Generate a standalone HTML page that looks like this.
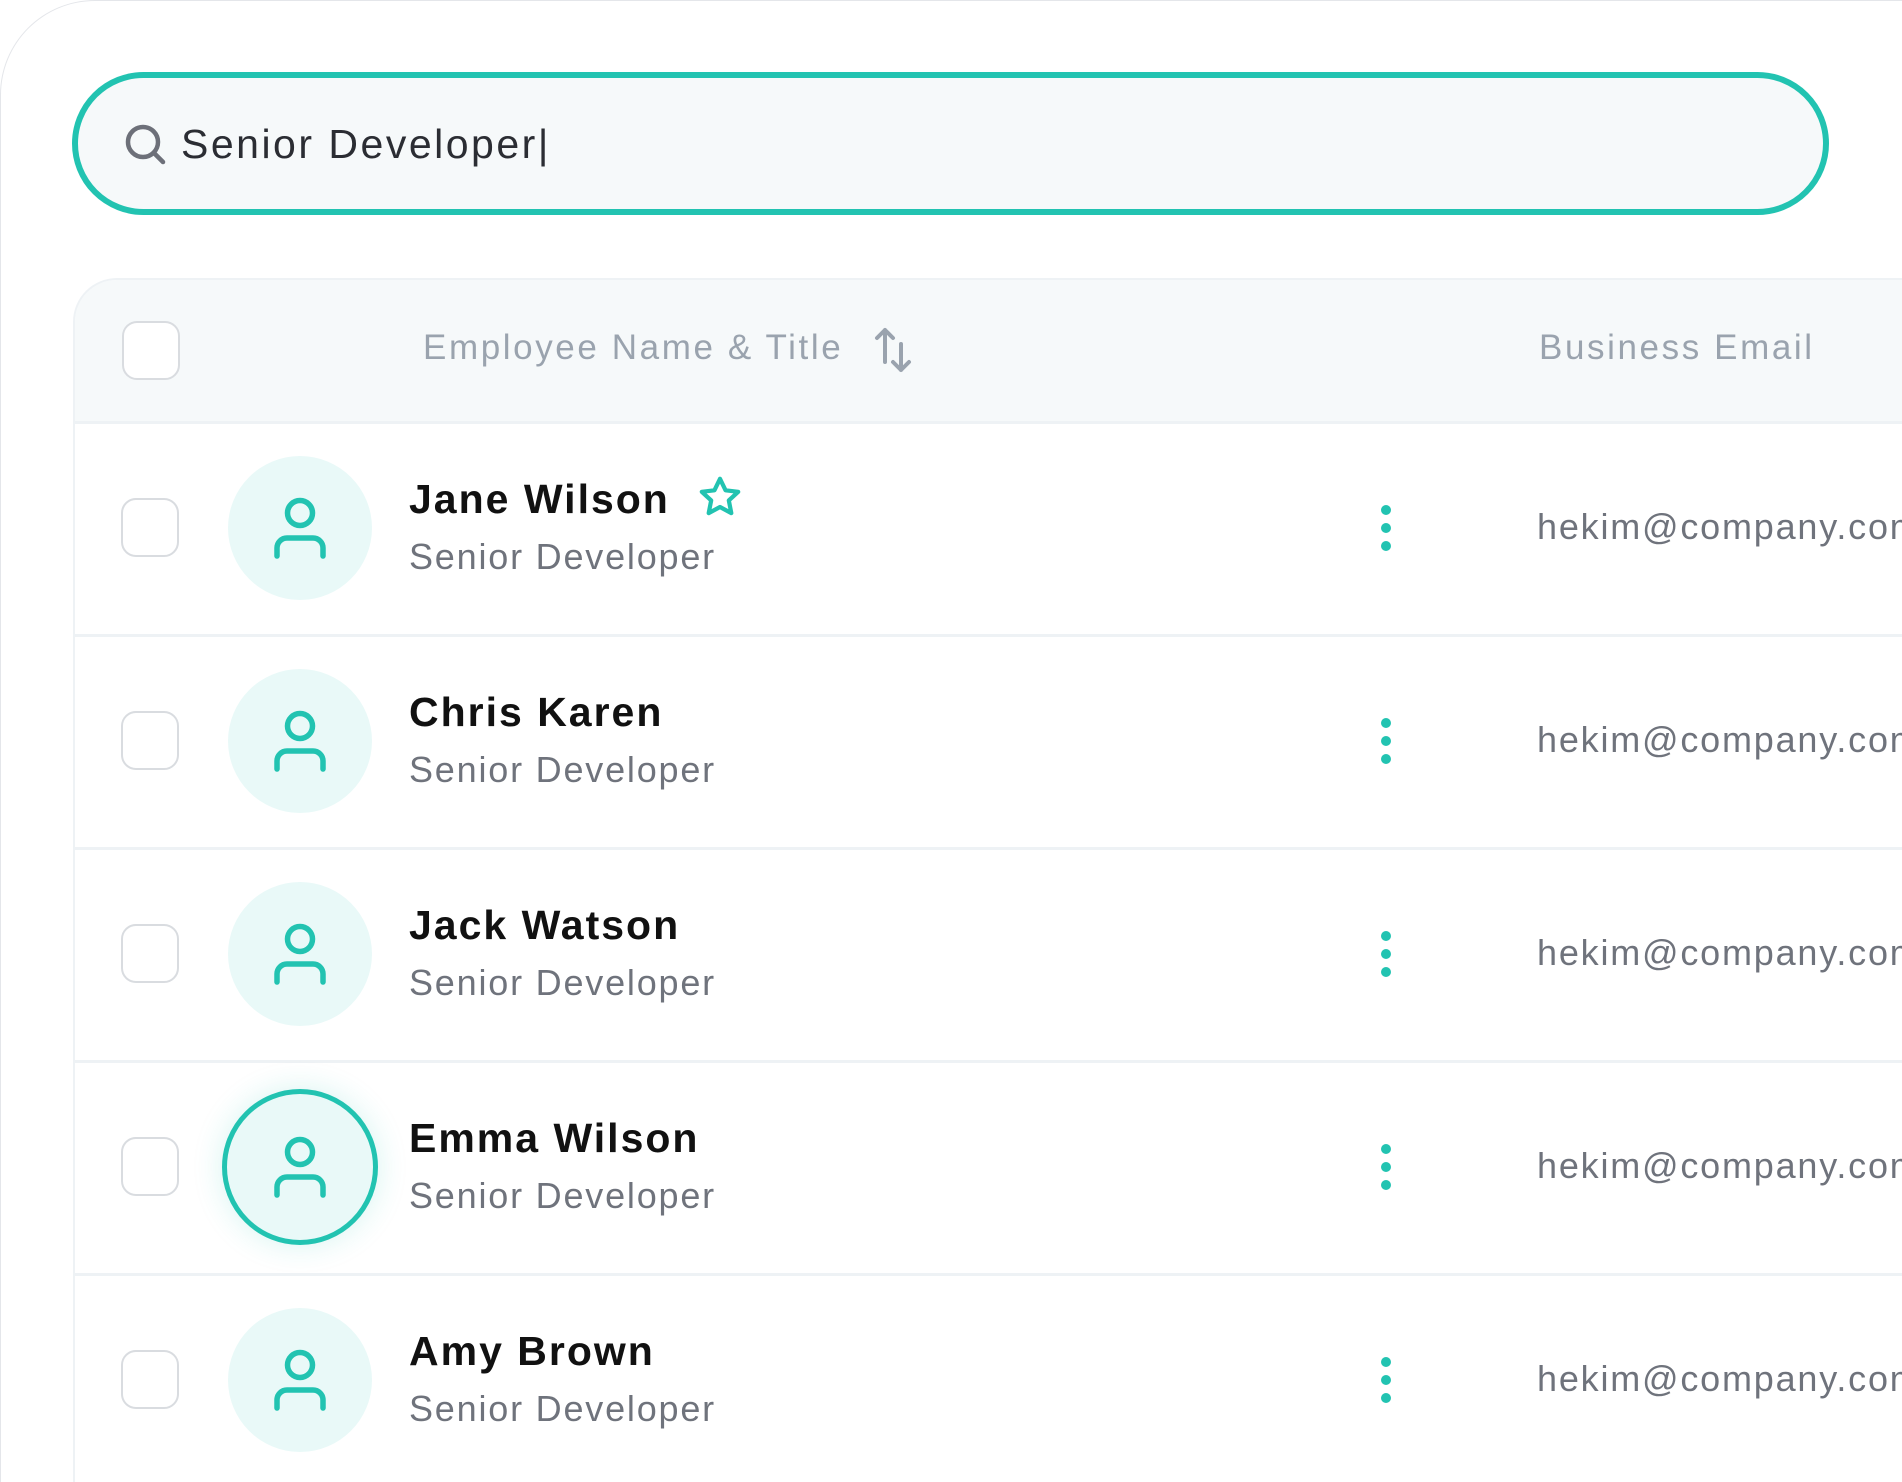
<!DOCTYPE html>
<html style="width:1902px;height:1482px;overflow:hidden"><head><meta charset="utf-8"><style>
*{margin:0;padding:0;box-sizing:border-box}
body{width:1902px;height:1482px;background:#fff;position:relative;overflow:hidden;font-family:"Liberation Sans",sans-serif}
.abs{position:absolute}
.outer{left:0;top:0;width:1902px;height:1482px;border-left:1px solid #e4e6ea;border-top:1px solid #e4e6ea;border-top-left-radius:95px;}
.search{left:72px;top:72px;width:1757px;height:143px;border:6px solid #22c3b1;border-radius:72px;background:#f6f9fa}
.stext{left:181px;top:118px;font-size:41px;color:#2b2d33;line-height:52px;letter-spacing:2.5px}
.table{left:73px;top:278px;width:1829px;height:1204px;border-left:2px solid #eef2f5;border-top:2px solid #eef2f5;border-top-left-radius:44px;overflow:hidden}
.head{left:0;top:0;width:100%;height:144px;background:#f6f9fa;border-bottom:3px solid #eef2f5}
.cb{width:58px;height:59px;border:2px solid #d9dce0;border-radius:15px;background:#fff}
.hd{font-size:35px;color:#9aa3ae;line-height:40px;letter-spacing:2.6px}
.row{left:0;width:100%;height:213px;border-bottom:3px solid #eef2f5}
.av{width:144px;height:144px;border-radius:50%;background:#e9f9f8}
.name{font-size:41px;font-weight:bold;color:#111;line-height:46px;letter-spacing:2px}
.sub{font-size:36px;color:#6f737c;line-height:42px;letter-spacing:1.8px}
.email{font-size:36px;color:#6f737c;line-height:42px;white-space:nowrap;letter-spacing:1.8px}
.clip{left:0;top:0;width:1902px;height:1482px;overflow:hidden}
</style></head><body>
<div class="abs clip">
<div class="abs outer"></div>
<div class="abs search"></div>
<svg class="abs" style="left:120px;top:120px" width="50" height="50" viewBox="0 0 50 50"><circle cx="23" cy="22" r="15" fill="none" stroke="#6d7079" stroke-width="4.5"/><line x1="34" y1="33" x2="43" y2="42" stroke="#6d7079" stroke-width="4.5" stroke-linecap="round"/></svg>
<div class="abs stext">Senior Developer|</div>

<div class="abs table">
 <div class="abs head">
  <div class="abs cb" style="left:47px;top:41px"></div>
  <div class="abs hd" style="left:348px;top:48px">Employee Name &amp; Title</div>
  <svg class="abs" style="left:795px;top:46px" width="50" height="50" viewBox="0 0 50 50"><path d="M15 4V36M7 12L15 4L23 12" fill="none" stroke="#9aa3ae" stroke-width="4" stroke-linecap="round" stroke-linejoin="round"/><path d="M31 18V44M23 36L31 44L39 36" fill="none" stroke="#9aa3ae" stroke-width="4" stroke-linecap="round" stroke-linejoin="round"/></svg>
  <div class="abs hd" style="left:1464px;top:48px">Business Email</div>
 </div>
 <div class="abs row" style="top:144px"></div>
 <div class="abs row" style="top:357px"></div>
 <div class="abs row" style="top:570px"></div>
 <div class="abs row" style="top:783px"></div>
</div>

<div class="abs cb" style="left:121px;top:498px"></div>
<div class="abs av" style="left:228px;top:456px"></div>
<div class="abs name" style="left:409px;top:476px">Jane Wilson</div>
<svg class="abs" style="left:697px;top:474px" width="46" height="46" viewBox="0 0 24 24"><path d="M12 2.5l2.9 6 6.6.8-4.9 4.5 1.3 6.6L12 17.2 6.1 20.4l1.3-6.6L2.5 9.3l6.6-.8z" fill="none" stroke="#22c3b1" stroke-width="2.2" stroke-linejoin="round"/></svg>
<div class="abs sub" style="left:409px;top:536px">Senior Developer</div>
<div class="abs cb" style="left:121px;top:711px"></div>
<div class="abs av" style="left:228px;top:669px"></div>
<div class="abs name" style="left:409px;top:689px">Chris Karen</div>
<div class="abs sub" style="left:409px;top:749px">Senior Developer</div>
<div class="abs cb" style="left:121px;top:924px"></div>
<div class="abs av" style="left:228px;top:882px"></div>
<div class="abs name" style="left:409px;top:902px">Jack Watson</div>
<div class="abs sub" style="left:409px;top:962px">Senior Developer</div>
<div class="abs cb" style="left:121px;top:1137px"></div>
<div class="abs av" style="left:222px;top:1089px;width:156px;height:156px;border:5px solid #22c3b1;box-shadow:0 0 30px rgba(34,195,177,0.18)"></div>
<div class="abs name" style="left:409px;top:1115px">Emma Wilson</div>
<div class="abs sub" style="left:409px;top:1175px">Senior Developer</div>
<div class="abs cb" style="left:121px;top:1350px"></div>
<div class="abs av" style="left:228px;top:1308px"></div>
<div class="abs name" style="left:409px;top:1328px">Amy Brown</div>
<div class="abs sub" style="left:409px;top:1388px">Senior Developer</div>

<svg class="abs" style="left:0;top:0" width="1902" height="1482">
 <g fill="none" stroke="#22c3b1" stroke-width="5.5" stroke-linecap="round">
  <g transform="translate(300,528)"><circle cx="0" cy="-15" r="12.5"/><path d="M-23 28V20a10 10 0 0 1 10-10H13a10 10 0 0 1 10 10V28"/></g>
  <g transform="translate(300,741)"><circle cx="0" cy="-15" r="12.5"/><path d="M-23 28V20a10 10 0 0 1 10-10H13a10 10 0 0 1 10 10V28"/></g>
  <g transform="translate(300,954)"><circle cx="0" cy="-15" r="12.5"/><path d="M-23 28V20a10 10 0 0 1 10-10H13a10 10 0 0 1 10 10V28"/></g>
  <g transform="translate(300,1167)"><circle cx="0" cy="-15" r="12.5"/><path d="M-23 28V20a10 10 0 0 1 10-10H13a10 10 0 0 1 10 10V28"/></g>
  <g transform="translate(300,1380)"><circle cx="0" cy="-15" r="12.5"/><path d="M-23 28V20a10 10 0 0 1 10-10H13a10 10 0 0 1 10 10V28"/></g>
 </g>
 <g fill="#22c3b1">
  <circle cx="1386" cy="510" r="5"/><circle cx="1386" cy="528" r="5"/><circle cx="1386" cy="546" r="5"/>
  <circle cx="1386" cy="723" r="5"/><circle cx="1386" cy="741" r="5"/><circle cx="1386" cy="759" r="5"/>
  <circle cx="1386" cy="936" r="5"/><circle cx="1386" cy="954" r="5"/><circle cx="1386" cy="972" r="5"/>
  <circle cx="1386" cy="1149" r="5"/><circle cx="1386" cy="1167" r="5"/><circle cx="1386" cy="1185" r="5"/>
  <circle cx="1386" cy="1362" r="5"/><circle cx="1386" cy="1380" r="5"/><circle cx="1386" cy="1398" r="5"/>
 </g>
</svg>
<div class="abs email" style="left:1537px;top:506px">hekim@company.com</div>
<div class="abs email" style="left:1537px;top:719px">hekim@company.com</div>
<div class="abs email" style="left:1537px;top:932px">hekim@company.com</div>
<div class="abs email" style="left:1537px;top:1145px">hekim@company.com</div>
<div class="abs email" style="left:1537px;top:1358px">hekim@company.com</div>
</div>
</body></html>
